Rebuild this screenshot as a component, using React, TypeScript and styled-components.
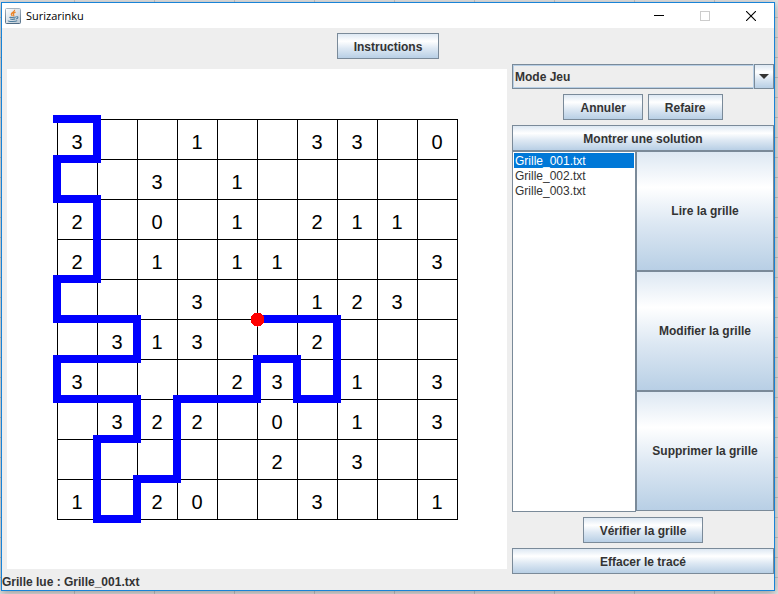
import React, { useState } from 'react';
import styled, { createGlobalStyle, css } from 'styled-components';

const GlobalStyle = createGlobalStyle`
  *, *::before, *::after { box-sizing: border-box; }
  html { min-height: 100%; background-color: #e4e4e4; }
  body {
    margin: 0;
    min-height: 100vh;
    background-color: #e4e4e4;
    background-image:
      linear-gradient(to right, #c4c4c4 1px, transparent 1px),
      linear-gradient(to bottom, #c4c4c4 1px, transparent 1px);
    background-size: 80px 80px, 20px 20px;
    background-position: 74px 0, 0 17px;
    font-family: "Liberation Sans", Arial, sans-serif;
    font-size: 12px;
    color: #333333;
  }
`;

const metal = css`
  background-image: linear-gradient(to bottom, #dde8f3 0%, #ffffff 30%, #dde8f3 60%, #b8cfe5 100%);
`;

const Desktop = styled.div`
  padding: 2px 3px 3px 1px;
`;

const Frame = styled.main`
  display: flex;
  flex-direction: column;
  border: 1px solid #1883d7;
  background: #eeeeee;
  box-shadow: 0 2px 8px rgba(0, 0, 0, 0.35);
`;

const TitleBar = styled.header`
  display: flex;
  align-items: center;
  height: 25px;
  padding-left: 3px;
  background: #ffffff;
`;

const Title = styled.h1`
  flex: 1;
  margin: 0 0 0 5px;
  font: 400 11px/16px "Open Sans", "Noto Sans", sans-serif;
  color: #000000;
`;

const WindowButton = styled.button`
  display: flex;
  align-items: center;
  justify-content: center;
  width: 46px;
  height: 25px;
  padding: 0;
  border: 0;
  background: transparent;
`;

const TopBar = styled.div`
  display: flex;
  justify-content: center;
  padding: 5px;
`;

const MetalButton = styled.button<{ $wide?: boolean; $tall?: boolean }>`
  ${metal}
  width: ${p => (p.$wide ? '100%' : 'auto')};
  height: ${p => (p.$tall ? 'auto' : '26px')};
  padding: ${p => (p.$tall ? 0 : 2)}px ${p => (p.$wide ? 0 : 16)}px 0;
  border: 1px solid #7a8a99;
  border-radius: 0;
  font: bold 12px/16px "Liberation Sans", Arial, sans-serif;
  color: #333333;
  white-space: nowrap;
`;

const Body = styled.div`
  display: flex;
`;

const BoardArea = styled.section`
  flex: 1;
  display: flex;
  justify-content: center;
  margin: 5px;
  background: #ffffff;
`;

const BoardDrawing = styled.svg`
  display: block;
  font-family: "Liberation Sans", Arial, sans-serif;
  font-size: 20px;
`;

const Side = styled.aside`
  flex: none;
  width: 262px;
  display: flex;
  flex-direction: column;
`;

const Combo = styled.div`
  display: grid;
  grid-template-columns: 1fr 20px;
  height: 25px;
`;

const ModeSelect = styled.select`
  grid-area: 1 / 1 / 2 / 3;
  appearance: none;
  margin: 0;
  padding: 0 20px 0 2px;
  border: 1px solid #7a8a99;
  border-radius: 0;
  background: #eeeeee;
  box-shadow: inset 0 0 0 1px #b8cfe5;
  font: bold 12px/16px "Liberation Sans", Arial, sans-serif;
  color: #333333;
`;

const ComboArrow = styled.span`
  ${metal}
  grid-area: 1 / 2;
  display: flex;
  align-items: center;
  justify-content: center;
  border: 1px solid #7a8a99;
  box-shadow: -1px 0 #b8cfe5;
  pointer-events: none;
  z-index: 1;
`;

const ButtonRow = styled.div`
  display: flex;
  justify-content: center;
  gap: 5px;
  padding: 5px;
`;

const GridManager = styled.div`
  flex: 1;
  display: grid;
  grid-template-columns: 124px 1fr;
`;

const FileList = styled.select`
  appearance: none;
  width: 100%;
  height: 100%;
  padding: 1px;
  border: 1px solid #7a8a99;
  border-radius: 0;
  outline: 0;
  background: #ffffff;
  font: 12px/15px "Liberation Sans", Arial, sans-serif;
  color: #333333;
`;

const FileOption = styled.option`
  min-height: 15px;
  height: 15px;
  padding: 1px 1px 0;
  line-height: 14px;

  &:checked {
    background: #0078d7 linear-gradient(#0078d7, #0078d7);
    color: #ffffff;
  }
`;

const Actions = styled.div`
  display: grid;
  grid-auto-rows: 1fr;
  margin-bottom: 1px;
`;

const Status = styled.footer`
  font-weight: bold;
  line-height: 16px;
`;

const CELL = 40;
const MARGIN = 50;
const SIZE = 10;

const CLUES = [
  '3  1  33 0',
  '  3 1     ',
  '2 0 1 211 ',
  '2 1 11   3',
  '   3  123 ',
  ' 313  2   ',
  '3   23 1 3',
  ' 322 0 1 3',
  '     2 3  ',
  '1 20  3  1',
];

const TRACE: [number, number][] = [
  [0, 0], [1, 0], [1, 1], [0, 1], [0, 2], [1, 2], [1, 4], [0, 4], [0, 5], [2, 5],
  [2, 6], [0, 6], [0, 7], [2, 7], [2, 8], [1, 8], [1, 10], [2, 10], [2, 9], [3, 9],
  [3, 7], [5, 7], [5, 6], [6, 6], [6, 7], [7, 7], [7, 5], [5, 5],
];

const at = (n: number) => MARGIN + n * CELL;

function Board() {
  const lines = Array.from({ length: SIZE + 1 }, (_, i) => at(i) + 0.5);
  const start = at(0);
  const end = at(SIZE) + 1;
  const [endX, endY] = TRACE[TRACE.length - 1];
  return (
    <BoardDrawing width="500" height="500" viewBox="0 0 500 500" role="img" aria-label="Grille de jeu">
      <g stroke="#000" strokeWidth="1" shapeRendering="crispEdges">
        {lines.map(p => (
          <React.Fragment key={p}>
            <line x1={start} x2={end} y1={p} y2={p} />
            <line y1={start} y2={end} x1={p} x2={p} />
          </React.Fragment>
        ))}
      </g>
      <g fill="#000" textAnchor="middle">
        {CLUES.flatMap((row, r) =>
          [...row].map((clue, c) =>
            clue === ' ' ? null : (
              <text key={`${r}-${c}`} x={at(c) + 20} y={at(r) + 30}>{clue}</text>
            ),
          ),
        )}
      </g>
      <polyline
        points={TRACE.map(([x, y]) => `${at(x)},${at(y)}`).join(' ')}
        fill="none"
        stroke="#0000ff"
        strokeWidth="8"
        strokeLinecap="square"
        shapeRendering="crispEdges"
      />
      <circle cx={at(endX) + 0.5} cy={at(endY) + 0.5} r="7" fill="#ff0000" shapeRendering="crispEdges" />
    </BoardDrawing>
  );
}

function JavaIcon() {
  return (
    <svg width="16" height="16" viewBox="0 0 16 16" aria-hidden="true">
      <defs>
        <linearGradient id="tile" x1="0" y1="0" x2="1" y2="1">
          <stop offset="0" stopColor="#ffffff" />
          <stop offset="1" stopColor="#b9c6d2" />
        </linearGradient>
        <linearGradient id="rim" x1="0" y1="0" x2="0" y2="1">
          <stop offset="0" stopColor="#a9b5c0" />
          <stop offset="1" stopColor="#4f6c86" />
        </linearGradient>
      </defs>
      <rect x="0.5" y="0.5" width="15" height="15" rx="1" fill="url(#tile)" stroke="url(#rim)" />
      <path d="M9.6 1.8C10.3 3.8 6 4.7 6.3 6.3C6.4 7 7 7.3 7.4 8.3M10.6 4.2C8.4 5 7.8 5.9 8.7 7C9 7.5 8.8 7.9 8.4 8.3" fill="none" stroke="#e8852b" strokeWidth="1.3" />
      <path d="M4.6 9.1C4 9.6 9 9.8 11 9.1M5.2 10.9C6.5 11.4 9 11.3 10.3 10.9M11.2 8.8C13.6 8.2 13.3 10.4 11.2 10.9M3.4 12.6C2.2 13.6 10.8 13.9 12.2 12.7" fill="none" stroke="#4f7f9f" strokeWidth="1.1" />
    </svg>
  );
}

const FILES = ['Grille_001.txt', 'Grille_002.txt', 'Grille_003.txt'];

export default function App() {
  const [file, setFile] = useState(FILES[0]);
  return (
    <>
      <GlobalStyle />
      <Desktop>
        <Frame>
          <TitleBar>
            <JavaIcon />
            <Title>Surizarinku</Title>
            <WindowButton aria-label="Réduire">
              <svg width="10" height="10" viewBox="0 0 10 10"><path d="M0 4.5H10" stroke="#000" /></svg>
            </WindowButton>
            <WindowButton aria-label="Agrandir" disabled>
              <svg width="10" height="10" viewBox="0 0 10 10"><rect x="0.5" y="0.5" width="9" height="9" fill="none" stroke="#ccc" /></svg>
            </WindowButton>
            <WindowButton aria-label="Fermer">
              <svg width="10" height="10" viewBox="0 0 10 10"><path d="M0 0L10 10M10 0L0 10" stroke="#000" strokeWidth="1.1" /></svg>
            </WindowButton>
          </TitleBar>
          <TopBar>
            <MetalButton>Instructions</MetalButton>
          </TopBar>
          <Body>
            <BoardArea>
              <Board />
            </BoardArea>
            <Side>
              <Combo>
                <ModeSelect aria-label="Mode">
                  <option>Mode Jeu</option>
                </ModeSelect>
                <ComboArrow>
                  <svg width="10" height="5" viewBox="0 0 10 5"><path d="M0 0H10L5 5Z" fill="#333" /></svg>
                </ComboArrow>
              </Combo>
              <ButtonRow>
                <MetalButton>Annuler</MetalButton>
                <MetalButton>Refaire</MetalButton>
              </ButtonRow>
              <MetalButton $wide>Montrer une solution</MetalButton>
              <GridManager>
                <FileList size={20} aria-label="Grilles" value={file} onChange={e => setFile(e.target.value)}>
                  {FILES.map(name => (
                    <FileOption key={name} value={name}>{name}</FileOption>
                  ))}
                </FileList>
                <Actions>
                  <MetalButton $wide $tall>Lire la grille</MetalButton>
                  <MetalButton $wide $tall>Modifier la grille</MetalButton>
                  <MetalButton $wide $tall>Supprimer la grille</MetalButton>
                </Actions>
              </GridManager>
              <ButtonRow>
                <MetalButton>Vérifier la grille</MetalButton>
              </ButtonRow>
              <MetalButton $wide>Effacer le tracé</MetalButton>
            </Side>
          </Body>
          <Status>Grille lue : {file}</Status>
        </Frame>
      </Desktop>
    </>
  );
}
